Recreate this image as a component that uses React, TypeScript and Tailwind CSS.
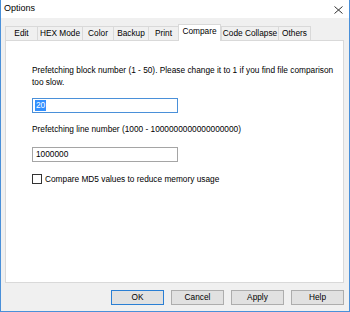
import { useState } from 'react'

const tabs = [
  { label: 'Edit', w: 'w-[32px]' },
  { label: 'HEX Mode', w: 'w-[45px]' },
  { label: 'Color', w: 'w-[31px]' },
  { label: 'Backup', w: 'w-[35px]' },
  { label: 'Print', w: 'w-[30px]' },
  { label: 'Compare', w: 'w-[43px]' },
  { label: 'Code Collapse', w: 'w-[57px]' },
  { label: 'Others', w: 'w-[33px]' },
]

export default function App() {
  const [active, setActive] = useState('Compare')
  const [md5, setMd5] = useState(false)

  return (
    <div className="w-[350px] h-[312px] flex flex-col bg-[#f0f0f0] border-x border-b border-[#4a90d9] font-['Liberation_Sans',sans-serif] text-[8.3px] text-black overflow-hidden">
      {/* Title bar */}
      <div className="h-[18px] bg-white flex items-center justify-between pl-[3px] pr-[6px]">
        <span className="text-[9px]">Options</span>
        <svg width="9" height="8" viewBox="0 0 9 8" className="mt-[2px]">
          <path d="M0.5 0.5 L8.5 7.5 M8.5 0.5 L0.5 7.5" stroke="#333" strokeWidth="1" />
        </svg>
      </div>

      {/* Body */}
      <div className="flex-1 flex flex-col pt-[6px] pl-[4px] pr-[5px] pb-[6px]">
        {/* Tabs */}
        <div className="h-[17px] flex items-end relative z-10">
          {tabs.map((t, i) => {
            const sel = t.label === active
            return (
              <button
                key={t.label}
                onClick={() => setActive(t.label)}
                className={`${t.w} shrink-0 flex items-center justify-center border-[#d9d9d9] ${
                  sel
                    ? 'h-[17px] bg-white border-t border-x pb-[3px]'
                    : `h-[14px] mb-[1px] bg-[#f0f0f0] border-t border-l ${i === tabs.length - 1 ? 'border-r' : ''}`
                }`}
              >
                {t.label}
              </button>
            )
          })}
        </div>

        {/* Pane */}
        <div className="-mt-px h-[243px] bg-white border border-[#d9d9d9] pl-[26px] pt-[23px] flex flex-col items-start">
          <p className="leading-[12px] w-[306px]">
            Prefetching block number (1 - 50). Please change it to 1 if you find file comparison too slow.
          </p>
          <div className="mt-[10px] w-[146px] h-[15px] border border-[#4a90d9] flex items-center px-[2px]">
            <span className="bg-[#3390ff] text-white leading-[11px] px-px">20</span>
          </div>
          <p className="mt-[10px] leading-[12px]">Prefetching line number (1000 - 1000000000000000000)</p>
          <div className="mt-[12px] w-[146px] h-[15px] border border-[#a5a5a5] flex items-center px-[3px]">
            1000000
          </div>
          <label className="mt-[11px] flex items-center gap-[3px] cursor-pointer">
            <span
              onClick={() => setMd5(!md5)}
              className="w-[10px] h-[10px] border border-[#333] bg-white flex items-center justify-center text-[8px] leading-none"
            >
              {md5 ? '✓' : ''}
            </span>
            <span>Compare MD5 values to reduce memory usage</span>
          </label>
        </div>

        {/* Buttons */}
        <div className="mt-[7px] flex justify-end gap-[7px]">
          <button className="w-[53px] h-[15px] bg-[#e1e1e1] border border-[#2a7fd4]">OK</button>
          <button className="w-[53px] h-[15px] bg-[#e1e1e1] border border-[#adadad]">Cancel</button>
          <button className="w-[53px] h-[15px] bg-[#e1e1e1] border border-[#adadad]">Apply</button>
          <button className="w-[53px] h-[15px] bg-[#e1e1e1] border border-[#adadad]">Help</button>
        </div>
      </div>
    </div>
  )
}
